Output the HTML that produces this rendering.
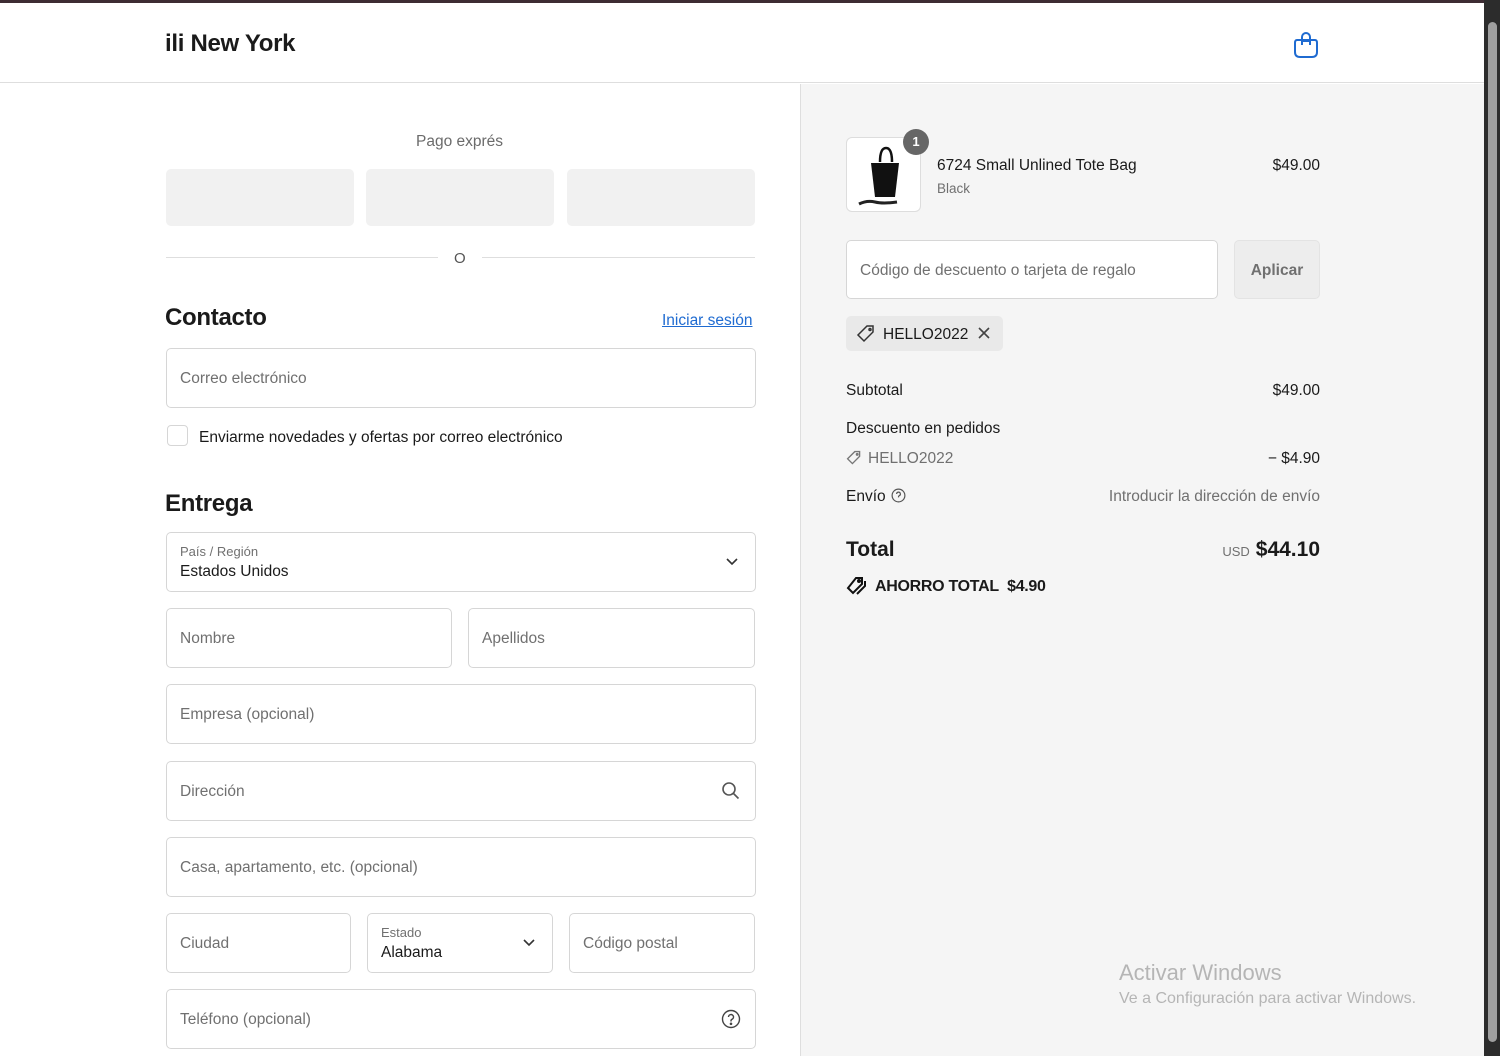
<!DOCTYPE html>
<html><head><meta charset="utf-8"><style>
*{box-sizing:border-box;margin:0;padding:0}
body{width:1500px;height:1056px;overflow:hidden;font-family:"Liberation Sans",sans-serif;color:#1a1a1a;background:#fff;position:relative;font-size:15px}
.top{position:absolute;left:0;top:0;width:1484px;height:3px;background:#3d2c33}
.hdr{position:absolute;left:0;top:3px;width:1484px;height:80px;border-bottom:1px solid #dedede;background:#fff}
.logo{position:absolute;left:165px;top:27px;font-size:24px;font-weight:bold;letter-spacing:-.3px}
.right{position:absolute;left:800px;top:84px;width:684px;height:972px;background:#f5f5f5;border-left:1px solid #dedede}
.sb{position:absolute;left:1484px;top:0;width:16px;height:1056px;background:#2c2c2c}
.thumb{position:absolute;left:1488px;top:22px;width:9px;height:1020px;background:#9f9f9f;border-radius:5px}
.abs{position:absolute}
.inp{position:absolute;border:1px solid #d6d6d6;border-radius:5px;background:#fff;height:60px;color:#707070;font-size:15.5px;padding-left:13px;line-height:58px}
.ex{position:absolute;top:169px;width:188px;height:57px;background:#f1f1f1;border-radius:5px}
h2{position:absolute;font-size:24px;font-weight:bold;letter-spacing:-.3px}
.sm{font-size:13px;color:#707070;line-height:16px}
.r{position:absolute;right:180px;text-align:right}
</style></head><body>
<div class="top"></div>
<div class="hdr"><div class="logo">ili New York</div>
<svg class="abs" style="left:1293px;top:26px" width="26" height="30" viewBox="0 0 26 30" fill="none" stroke="#1f6bd1" stroke-width="2"><path d="M4 11h18q2 0 2 3v9q0 5-5 5H7q-5 0-5-5v-9q0-3 2-3z"/><path d="M9 16V8a4 4 0 0 1 8 0v8"/><path d="M9 12h8"/></svg>
</div>
<div class="right"></div>
<div class="sb"></div><div class="thumb"></div>

<div class="abs" style="left:416px;top:133px;color:#6b6b6b;font-size:15.5px">Pago exprés</div>
<div class="ex" style="left:166px"></div><div class="ex" style="left:366px"></div><div class="ex" style="left:567px"></div>
<div class="abs" style="left:166px;top:257px;width:272px;height:1px;background:#dedede"></div>
<div class="abs" style="left:482px;top:257px;width:273px;height:1px;background:#dedede"></div>
<div class="abs" style="left:454px;top:250px;color:#555;font-size:15px">O</div>

<h2 style="left:165px;top:304px">Contacto</h2>
<div class="abs" style="left:662px;top:312px;color:#1f6bd1;text-decoration:underline;font-size:15.5px">Iniciar sesión</div>
<div class="inp" style="left:166px;top:348px;width:590px;line-height:60px">Correo electrónico</div>
<div class="abs" style="left:167px;top:425px;width:21px;height:21px;border:1px solid #d6d6d6;border-radius:4px"></div>
<div class="abs" style="left:199px;top:429px;font-size:15.5px">Enviarme novedades y ofertas por correo electrónico</div>

<h2 style="left:165px;top:490px">Entrega</h2>
<div class="inp" style="left:166px;top:532px;width:590px;line-height:normal;padding-top:11px"><div class="sm">País / Región</div><div style="color:#1a1a1a;font-size:15.5px;margin-top:3px">Estados Unidos</div>
<svg class="abs" style="left:558px;top:24px" width="14" height="10" viewBox="0 0 14 10" fill="none" stroke="#333" stroke-width="1.6"><path d="M2 2l5 5 5-5"/></svg></div>
<div class="inp" style="left:166px;top:608px;width:286px;line-height:60px">Nombre</div>
<div class="inp" style="left:468px;top:608px;width:287px;line-height:60px">Apellidos</div>
<div class="inp" style="left:166px;top:684px;width:590px;line-height:60px">Empresa (opcional)</div>
<div class="inp" style="left:166px;top:761px;width:590px;line-height:60px">Dirección
<svg class="abs" style="left:554px;top:19px" width="20" height="20" viewBox="0 0 20 20" fill="none" stroke="#555" stroke-width="1.6"><circle cx="8" cy="8" r="6"/><path d="M12.5 12.5l5 5"/></svg></div>
<div class="inp" style="left:166px;top:837px;width:590px;line-height:60px">Casa, apartamento, etc. (opcional)</div>
<div class="inp" style="left:166px;top:913px;width:185px;line-height:60px">Ciudad</div>
<div class="inp" style="left:367px;top:913px;width:186px;line-height:normal;padding-top:11px"><div class="sm">Estado</div><div style="color:#1a1a1a;font-size:15.5px;margin-top:3px">Alabama</div>
<svg class="abs" style="left:154px;top:24px" width="14" height="10" viewBox="0 0 14 10" fill="none" stroke="#333" stroke-width="1.6"><path d="M2 2l5 5 5-5"/></svg></div>
<div class="inp" style="left:569px;top:913px;width:186px;line-height:60px">Código postal</div>
<div class="inp" style="left:166px;top:989px;width:590px;line-height:60px">Teléfono (opcional)
<svg class="abs" style="left:554px;top:19px" width="20" height="20" viewBox="0 0 20 20" fill="none" stroke="#444" stroke-width="1.4"><circle cx="10" cy="10" r="8.5"/><path d="M7.5 8a2.5 2.5 0 1 1 3.5 2.3c-.7.3-1 .8-1 1.5v.7"/><circle cx="10" cy="14.8" r=".6" fill="#444"/></svg></div>

<!-- right -->
<div class="abs" style="left:846px;top:137px;width:75px;height:75px;border:1px solid #ddd;border-radius:6px;background:#fff;overflow:hidden">
<svg width="75" height="75" viewBox="0 0 75 75"><path d="M33 24q0-14 6-14t6 14" fill="none" stroke="#111" stroke-width="2.5"/><path d="M24 25h28l-4 34H28z" fill="#111"/><path d="M12 66q8-4 16-2t22 0" fill="none" stroke="#222" stroke-width="3"/></svg></div>
<div class="abs" style="left:903px;top:129px;width:26px;height:26px;border-radius:50%;background:#666;color:#fff;font-size:13px;font-weight:bold;text-align:center;line-height:26px">1</div>
<div class="abs" style="left:937px;top:157px;font-size:15.5px">6724 Small Unlined Tote Bag</div>
<div class="abs" style="left:937px;top:181px;font-size:13.5px;color:#707070">Black</div>
<div class="r" style="top:157px;font-size:15.5px">$49.00</div>

<div class="inp" style="left:846px;top:240px;width:372px;height:59px;line-height:59px">Código de descuento o tarjeta de regalo</div>
<div class="abs" style="left:1234px;top:240px;width:86px;height:59px;border:1px solid #e3e3e3;border-radius:5px;background:#ededed;color:#707070;font-weight:bold;text-align:center;line-height:59px;font-size:15.5px">Aplicar</div>
<div class="abs" style="left:846px;top:316px;width:157px;height:35px;background:#e9e9e9;border-radius:5px"></div>
<svg class="abs" style="left:856px;top:324px" width="20" height="20" viewBox="0 0 20 20" fill="none" stroke="#333" stroke-width="1.5"><path d="M11 2h6v6l-9 9-6-6z"/><circle cx="14" cy="5.5" r="1"/></svg>
<div class="abs" style="left:883px;top:326px;font-size:15.5px">HELLO2022</div>
<svg class="abs" style="left:977px;top:326px" width="14" height="14" viewBox="0 0 14 14" stroke="#444" stroke-width="1.6"><path d="M2 2l10 10M12 2L2 12"/></svg>

<div class="abs" style="left:846px;top:382px;font-size:15.5px">Subtotal</div><div class="r" style="top:382px;font-size:15.5px">$49.00</div>
<div class="abs" style="left:846px;top:420px;font-size:15.5px">Descuento en pedidos</div>
<svg class="abs" style="left:846px;top:450px" width="16" height="16" viewBox="0 0 20 20" fill="none" stroke="#777" stroke-width="1.7"><path d="M11 2h6v6l-9 9-6-6z"/><circle cx="14" cy="5.5" r="1"/></svg>
<div class="abs" style="left:868px;top:450px;font-size:15.5px;color:#707070">HELLO2022</div><div class="r" style="top:450px;font-size:15.5px">− $4.90</div>
<div class="abs" style="left:846px;top:488px;font-size:15.5px">Envío</div>
<svg class="abs" style="left:891px;top:488px" width="15" height="15" viewBox="0 0 20 20" fill="none" stroke="#555" stroke-width="1.6"><circle cx="10" cy="10" r="8.5"/><path d="M7.5 8a2.5 2.5 0 1 1 3.5 2.3c-.7.3-1 .8-1 1.5v.7"/></svg>
<div class="r" style="top:488px;font-size:15.5px;color:#707070">Introducir la dirección de envío</div>
<div class="abs" style="left:846px;top:538px;font-size:21px;font-weight:bold">Total</div>
<div class="r" style="top:538px"><span style="font-size:13px;color:#707070;margin-right:6px">USD</span><span style="font-size:21px;font-weight:bold">$44.10</span></div>
<svg class="abs" style="left:846px;top:576px" width="22" height="20" viewBox="0 0 22 20" fill="none" stroke="#111" stroke-width="2"><path d="M10 2h6v6l-9 9-5-5z"/><path d="M19 5v5l-8 8"/><circle cx="13" cy="5" r="1"/></svg>
<div class="abs" style="left:875px;top:578px;font-size:16px;font-weight:bold;letter-spacing:-.3px">AHORRO TOTAL&nbsp; $4.90</div>

<div class="abs" style="left:1119px;top:960px;font-size:22px;color:#b5b5b5">Activar Windows</div>
<div class="abs" style="left:1119px;top:990px;font-size:16px;color:#b5b5b5">Ve a Configuración para activar Windows.</div>
</body></html>
